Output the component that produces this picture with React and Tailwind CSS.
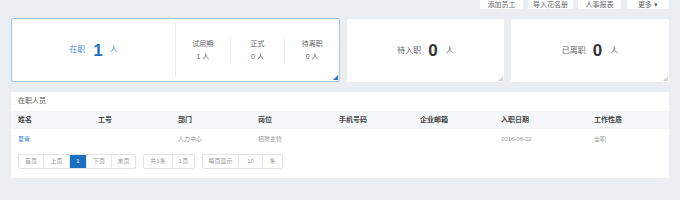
import React from "react";

const font = { fontFamily: '"Liberation Sans", "Noto Sans CJK SC", sans-serif' };

function Corner({ color }) {
  return (
    <svg className="absolute right-[1px] bottom-[1px]" width="5" height="5" viewBox="0 0 5 5">
      <polygon points="5,0 5,5 0,5" fill={color} />
    </svg>
  );
}

const cols = ["姓名", "工号", "部门", "岗位", "手机号码", "企业邮箱", "入职日期", "工作性质"];
const row = [
  { t: "夏青", c: "text-[#2f7fd0]" },
  { t: "", c: "" },
  { t: "人力中心", c: "text-[#999]" },
  { t: "招聘主管", c: "text-[#999]" },
  { t: "", c: "" },
  { t: "", c: "" },
  { t: "2016-08-22", c: "text-[#999]" },
  { t: "全职", c: "text-[#999]" },
];

export default function App() {
  return (
    <div className="w-[680px] h-[200px] bg-[#eaedf2] overflow-hidden" style={font}>
      <div className="flex justify-end pr-[11px] h-[10px]">
        {[
          ["添加员工", 43, 0],
          ["导入花名册", 45, 5],
          ["人事报表", 43, 5],
          ["更多 ▾", 42, 6],
        ].map(([t, w, ml]) => (
          <div
            key={t}
            className="h-[9px] bg-white flex items-center justify-center text-[7px] leading-none text-[#666] rounded-b-[1px]"
            style={{ width: w, marginLeft: ml }}
          >
            {t}
          </div>
        ))}
      </div>

      <div className="flex gap-[7px] mx-[11px] mt-[8px] items-end">
        <div className="relative w-[329px] h-[64px] bg-white border border-[#9fc8ec] rounded-[2px] flex items-center">
          <div className="w-[163px] flex items-center justify-center">
            <span className="text-[8px] text-[#4a8fd6]">在职</span>
            <span className="text-[17px] font-bold text-[#1a72c6] ml-[8px] leading-none">1</span>
            <span className="text-[8px] text-[#4a8fd6] ml-[7px]">人</span>
          </div>
          <div className="w-px h-[54px] bg-[#ebebeb]" />
          <div className="flex-1 flex items-center">
            {[
              ["试用期", "1 人"],
              ["正式", "0 人"],
              ["待离职", "0 人"],
            ].map(([a, b], i) => (
              <div key={a} className={`flex-1 flex flex-col items-center justify-center h-[27px] ${i > 0 ? "border-l border-[#eeeeee]" : ""}`}>
                <span className="text-[7px] leading-[9px] text-[#666]">{a}</span>
                <span className="text-[7px] leading-[9px] text-[#666] mt-[4px]">{b}</span>
              </div>
            ))}
          </div>
          <Corner color="#2a78c8" />
        </div>
        <div className="relative w-[157px] h-[63px] bg-white rounded-[2px] flex items-center justify-center">
          <span className="text-[8px] text-[#666]">待入职</span>
          <span className="text-[17px] font-bold text-[#333] ml-[7px] leading-none">0</span>
          <span className="text-[8px] text-[#666] ml-[8px]">人</span>
          <Corner color="#d6d6d6" />
        </div>
        <div className="relative w-[158px] h-[63px] bg-white rounded-[2px] flex items-center justify-center">
          <span className="text-[8px] text-[#666]">已离职</span>
          <span className="text-[17px] font-bold text-[#333] ml-[7px] leading-none">0</span>
          <span className="text-[8px] text-[#666] ml-[8px]">人</span>
          <Corner color="#d6d6d6" />
        </div>
      </div>

      <div className="mx-[11px] mt-[10px] h-[86px] bg-white rounded-[2px]">
        <div className="h-[19px] flex items-center px-[7px] text-[7px] text-[#555]">在职人员</div>
        <div className="h-[18px] bg-[#f4f6f9] grid grid-cols-[80px_80px_80px_81px_81px_81px_93px_1fr] items-center pl-[7px] text-[7px] font-semibold text-[#444]">
          {cols.map((c) => (
            <div key={c}>{c}</div>
          ))}
        </div>
        <div className="h-[20px] grid grid-cols-[80px_80px_80px_81px_81px_81px_93px_1fr] items-center pl-[7px] text-[6px]">
          {row.map((r, i) => (
            <div key={i} className={r.c}>{r.t}</div>
          ))}
        </div>
        <div className="flex mt-[5px] pl-[7px] h-[15px] text-[6px] text-[#999]">
          <div className="flex border border-[#e1e4e8] rounded-[2px]">
            {[["首页", 24], ["上页", 26], ["1", 17], ["下页", 25], ["末页", 24]].map(([t, w], i) => (
              <div
                key={t}
                className={`flex items-center justify-center ${i > 0 ? "border-l border-[#e1e4e8]" : ""} ${t === "1" ? "bg-[#1a6fc2] text-white" : ""}`}
                style={{ width: w }}
              >
                {t}
              </div>
            ))}
          </div>
          <div className="flex border border-[#e1e4e8] rounded-[2px] ml-[7px]">
            {[["共1条", 28], ["1页", 22]].map(([t, w], i) => (
              <div key={t} className={`flex items-center justify-center ${i > 0 ? "border-l border-[#e1e4e8]" : ""}`} style={{ width: w }}>
                {t}
              </div>
            ))}
          </div>
          <div className="flex border border-[#e1e4e8] rounded-[2px] ml-[7px]">
            {[["每页显示", 35], ["10", 24], ["条", 20]].map(([t, w], i) => (
              <div key={t} className={`flex items-center justify-center ${i > 0 ? "border-l border-[#e1e4e8]" : ""}`} style={{ width: w }}>
                {t}
              </div>
            ))}
          </div>
        </div>
      </div>
    </div>
  );
}
